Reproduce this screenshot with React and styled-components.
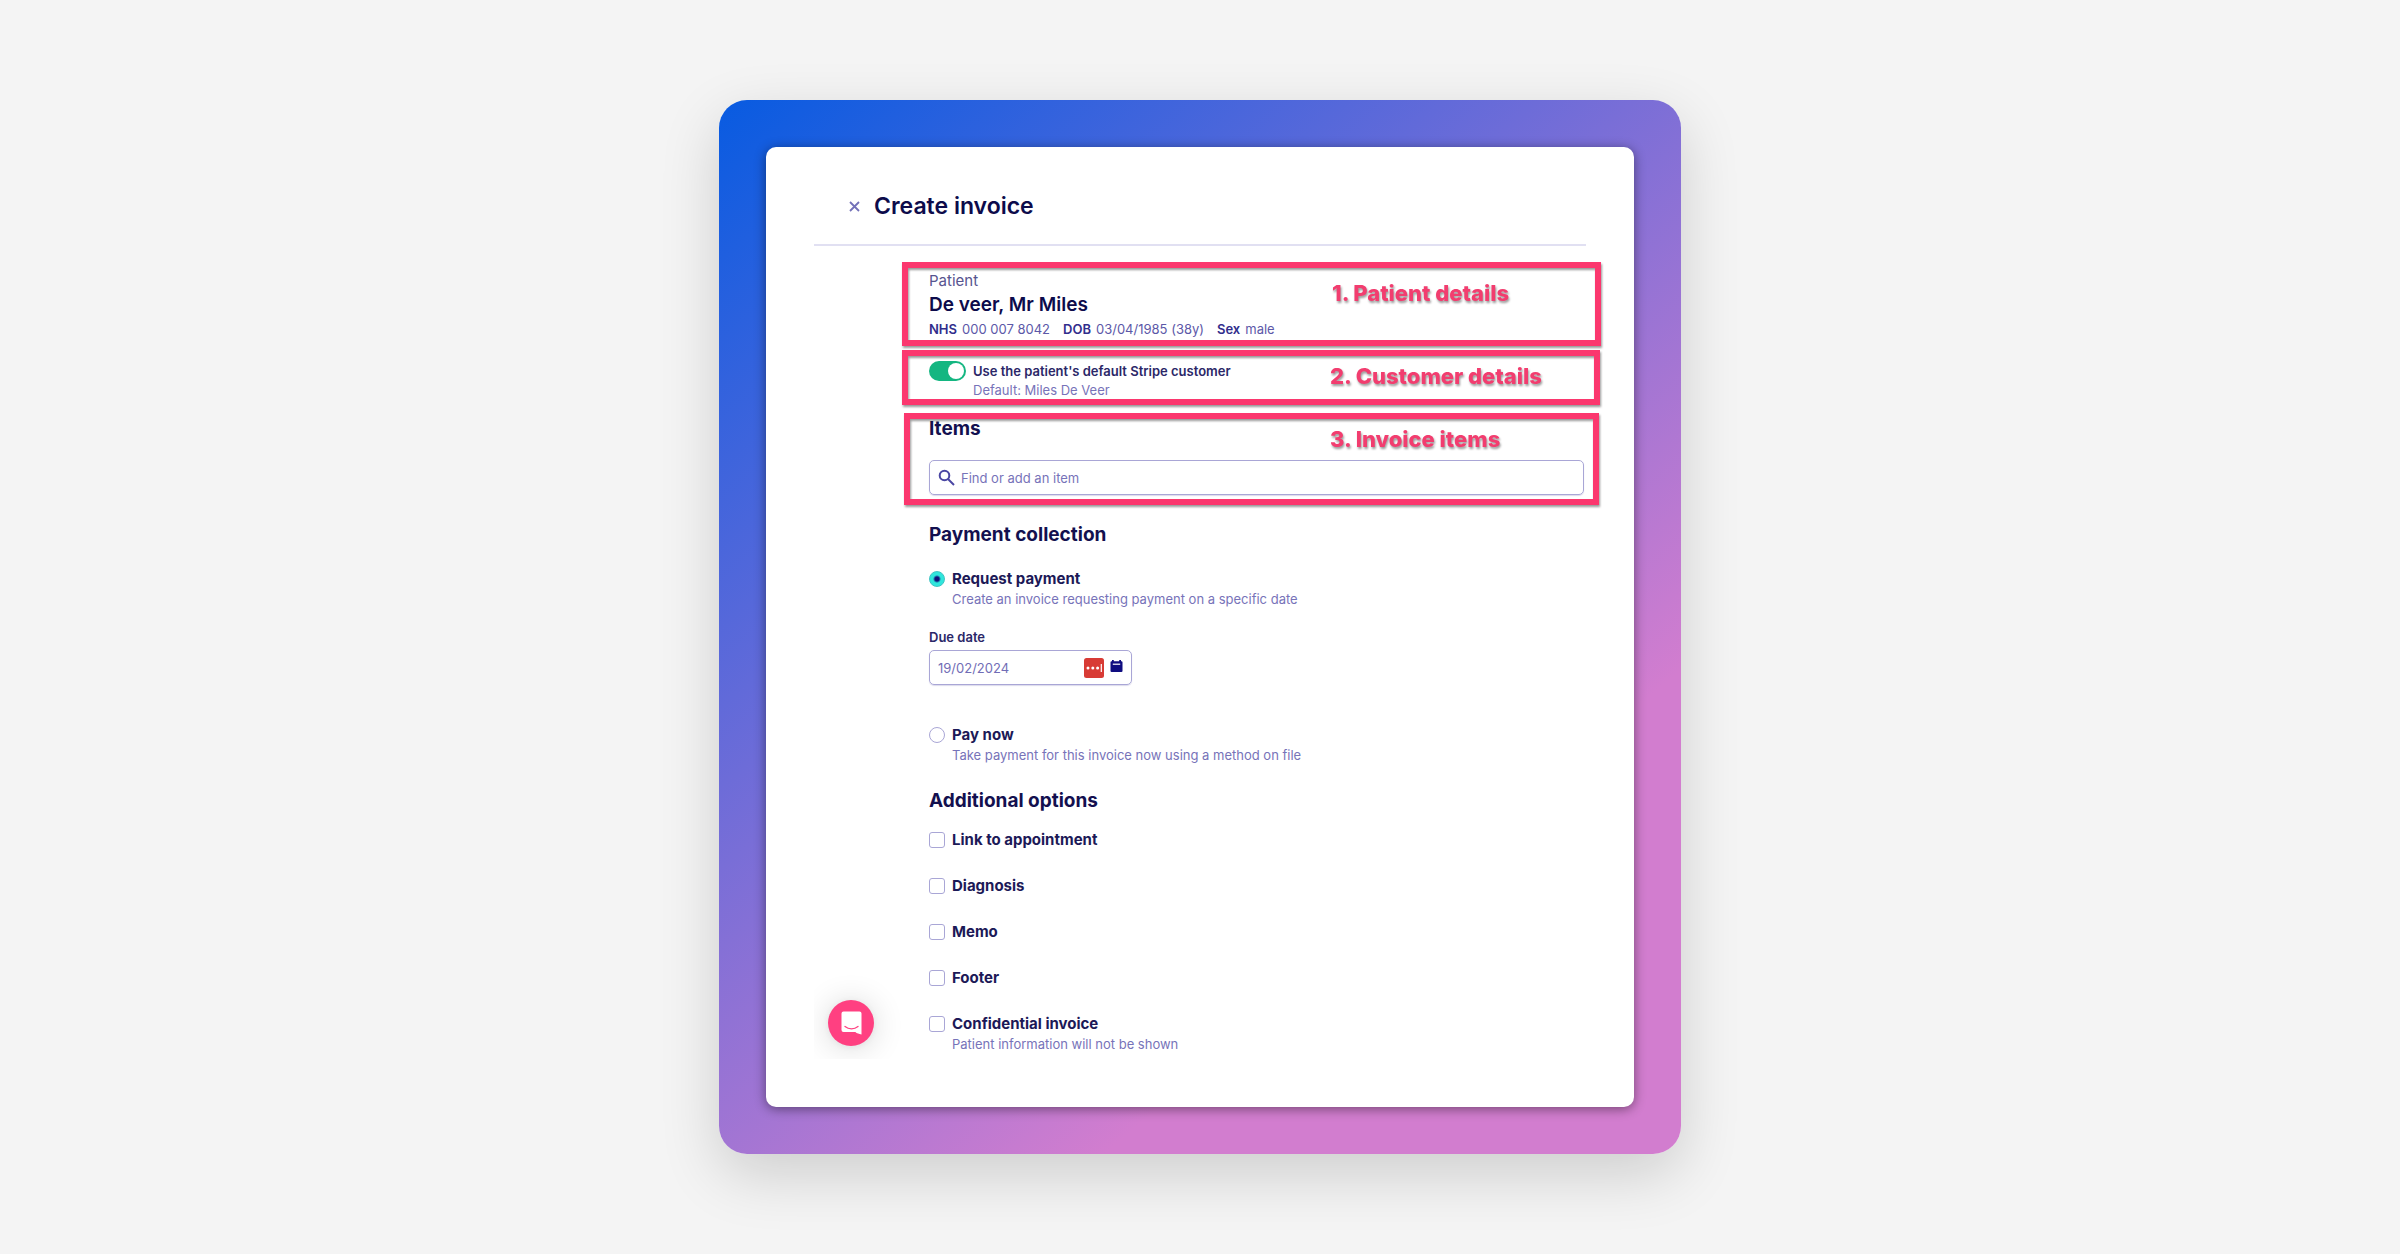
import React, { useState } from 'react';
import styled, { createGlobalStyle } from 'styled-components';

const GlobalStyle = createGlobalStyle`
  *, *::before, *::after {
    box-sizing: border-box;
  }

  body {
    margin: 0;
    background: #f4f4f4;
    color: #14124f;
    font-family: Inter, 'Liberation Sans', sans-serif;
  }

  h1, h2, p, dl, dd {
    margin: 0;
  }

  input, button {
    font: inherit;
    color: inherit;
  }
`;

const Page = styled.main`
  min-height: 100vh;
  display: flex;
  align-items: center;
  justify-content: center;
  padding: 24px;
`;

const Frame = styled.div`
  width: 100%;
  max-width: 962px;
  padding: 47px;
  border-radius: 28px;
  background: linear-gradient(140deg, #085be1 0%, #d27dcf 74%);
  box-shadow: 0 20px 60px rgba(0, 0, 0, 0.16);
`;

const Card = styled.div`
  padding: 43px 48px 48px;
  border-radius: 10px;
  background: #fff;
  box-shadow: 0 2px 12px rgba(0, 0, 0, 0.45);
`;

const Header = styled.header`
  display: flex;
  align-items: center;
  gap: 14px;
  padding: 0 35px 22px;
  border-bottom: 2px solid #e1e0f2;
`;

const CloseButton = styled.button`
  display: flex;
  padding: 0;
  border: 0;
  background: none;
  cursor: pointer;
`;

const Title = styled.h1`
  font-size: 23px;
  line-height: 32px;
  font-weight: 600;
  color: #0d0b4b;
`;

const Body = styled.div`
  display: grid;
  grid-template-columns: 115px 1fr;
`;

const Aside = styled.aside`
  display: flex;
  align-items: flex-end;
  padding: 0 0 13px 14px;
  overflow: hidden;
`;

const ChatButton = styled.button`
  display: flex;
  align-items: center;
  justify-content: center;
  width: 46px;
  height: 46px;
  padding: 0;
  border: 0;
  border-radius: 50%;
  background: #ff4081;
  box-shadow: 0 1px 6px rgba(0, 0, 0, 0.06), 0 2px 32px rgba(0, 0, 0, 0.16);
  cursor: pointer;
`;

const Form = styled.form`
  padding: 25px 2px 5px 0;
`;

const Section = styled.section`
  position: relative;
  margin-top: ${({ $space }) => $space || 0}px;
`;

/* Marker frame drawn over a section of the form */
const Highlight = styled.div`
  position: absolute;
  inset: ${({ $inset }) => $inset};
  padding: ${({ $pad }) => $pad};
  border: 6px solid #fb376e;
  filter: drop-shadow(1px 2px 1px rgba(0, 0, 0, 0.4));
  pointer-events: none;
`;

const HighlightLabel = styled.span`
  font-size: 22px;
  line-height: 28px;
  font-weight: 800;
  color: #f23d6f;
`;

const Overline = styled.p`
  font-size: 15px;
  line-height: 20px;
  color: #57548f;
`;

const PatientName = styled.p`
  font-size: 19px;
  line-height: 28px;
  font-weight: 600;
  color: #0d0b4b;
`;

const Facts = styled.dl`
  display: flex;
  flex-wrap: wrap;
  gap: 0 13px;
  font-size: 13px;
  line-height: 20px;
  color: #5c58a8;

  div {
    display: flex;
    gap: 5px;
  }

  dt {
    font-weight: 600;
    color: #312d8c;
  }
`;

const SectionTitle = styled.h2`
  font-size: 19px;
  line-height: 26px;
  font-weight: 700;
  color: #13104f;
`;

const SwitchRow = styled.div`
  display: grid;
  grid-template-columns: 37px 1fr;
  column-gap: 7px;
`;

const Switch = styled.input`
  appearance: none;
  display: flex;
  align-items: center;
  justify-content: flex-start;
  width: 37px;
  height: 20px;
  margin: 0;
  padding: 0 2px;
  border-radius: 10px;
  background: #b9b7dc;
  cursor: pointer;

  &::before {
    content: '';
    width: 16px;
    height: 16px;
    border-radius: 50%;
    background: #fff;
  }

  &:checked {
    justify-content: flex-end;
    background: #14b681;
  }
`;

const SwitchLabel = styled.label`
  font-size: 13px;
  line-height: 20px;
  font-weight: 600;
  color: #2b2768;
`;

const SwitchHint = styled.p`
  grid-column: 2;
  font-size: 13px;
  line-height: 18px;
  color: #7773b9;
`;

const Field = styled.div`
  display: flex;
  align-items: center;
  gap: 6px;
  height: 35px;
  width: ${({ $width }) => $width || '100%'};
  margin-top: ${({ $space }) => $space}px;
  padding: 0 8px;
  border: 1px solid #a9a6d6;
  border-radius: 5px;
  box-shadow: 0 1px 1px rgba(80, 76, 160, 0.2);

  svg {
    flex: none;
  }
`;

const TextInput = styled.input`
  flex: 1;
  min-width: 0;
  padding: 0;
  border: 0;
  outline: 0;
  background: none;
  font-size: 13px;
  line-height: 20px;
  color: #716db6;

  &::placeholder {
    color: #7773b9;
    opacity: 1;
  }
`;

const FieldLabel = styled.label`
  display: block;
  margin-top: 18px;
  font-size: 13px;
  line-height: 20px;
  font-weight: 600;
  color: #2b2768;
`;

const Choice = styled.div`
  display: grid;
  grid-template-columns: 16px 1fr;
  align-items: center;
  column-gap: 7px;
  margin-top: ${({ $space }) => $space || 0}px;
`;

const ChoiceInput = styled.input`
  appearance: none;
  width: 16px;
  height: 16px;
  margin: 0;
  border: 1px solid #a9a6d6;
  border-radius: ${({ type }) => (type === 'radio' ? '50%' : '3px')};
  background: #fff;
  cursor: pointer;

  &:checked {
    border-color: #3cc4c4;
    background: ${({ type }) =>
      type === 'radio' ? 'radial-gradient(circle, #10107c 2px, #2fe6dc 4px)' : '#2fe6dc'};
  }
`;

const ChoiceLabel = styled.label`
  font-size: 15px;
  line-height: 20px;
  font-weight: 700;
  color: #1c1957;
`;

const ChoiceHint = styled.p`
  grid-column: 2;
  font-size: 13px;
  line-height: 20px;
  color: #7773b9;
`;

const OptionList = styled.div`
  display: flex;
  flex-direction: column;
  gap: 26px;
  margin-top: 16px;
`;

const CloseIcon = () => (
  <svg width="11" height="11" viewBox="0 0 11 11" fill="none" stroke="#7371b8" strokeWidth="1.8">
    <path d="M1 1l9 9M10 1l-9 9" />
  </svg>
);

const SearchIcon = () => (
  <svg width="17" height="17" viewBox="0 0 17 17" fill="none" stroke="#4a46a3" strokeWidth="2">
    <circle cx="6.5" cy="6.5" r="4.8" />
    <path d="M10 10l6 6" />
  </svg>
);

const AutofillIcon = () => (
  <svg width="20" height="20" viewBox="0 0 20 20">
    <rect width="20" height="20" rx="2.5" fill="#d83b35" />
    <circle cx="4" cy="10" r="1.5" fill="#fff" />
    <circle cx="8.8" cy="10" r="1.5" fill="#fff" />
    <circle cx="13.6" cy="10" r="1.5" fill="#fff" />
    <rect x="16.7" y="6" width="1.2" height="8" fill="#fff" />
  </svg>
);

const CalendarIcon = () => (
  <svg width="13" height="18" viewBox="0 0 13 18">
    <path
      d="M2 1h1.8v1.2h5.400V1H11v1.200h.4A1.100 1.100 0 0 1 12.500 3.300v8.600a1.100 1.100 0 0 1-1.100 1.100H1.600A1.100 1.100 0 0 1 .5 11.900V3.300A1.100 1.100 0 0 1 1.600 2.200H2z"
      fill="#0f0d80"
    />
    <path d="M2.800 5.200h7.400" stroke="#fff" strokeWidth="1.200" />
  </svg>
);

const ChatIcon = () => (
  <svg width="21" height="24" viewBox="0 0 21 24">
    <path
      d="M2.500.5h16A2 2 0 0 1 20.500 2.500V23.500c-2.600-.4-4.500-1.200-6.200-2.500H2.500a2 2 0 0 1-2-2V2.500a2 2 0 0 1 2-2z"
      fill="#fff"
    />
    <path
      d="M4 15.500c3.800 3.100 9.200 3.100 13 0"
      fill="none"
      stroke="#ff4081"
      strokeWidth="1.300"
      strokeLinecap="round"
    />
  </svg>
);

const OPTIONS = [
  { id: 'appointment', label: 'Link to appointment' },
  { id: 'diagnosis', label: 'Diagnosis' },
  { id: 'memo', label: 'Memo' },
  { id: 'footer', label: 'Footer' },
  {
    id: 'confidential',
    label: 'Confidential invoice',
    hint: 'Patient information will not be shown',
  },
];

const App = () => {
  const [useDefault, setUseDefault] = useState(true);
  const [collection, setCollection] = useState('request');
  const [dueDate, setDueDate] = useState('19/02/2024');

  return (
    <Page>
      <GlobalStyle />
      <Frame>
        <Card>
          <Header>
            <CloseButton type="button" aria-label="Close">
              <CloseIcon />
            </CloseButton>
            <Title>Create invoice</Title>
          </Header>

          <Body>
            <Aside>
              <ChatButton type="button" aria-label="Open chat">
                <ChatIcon />
              </ChatButton>
            </Aside>

            <Form onSubmit={(e) => e.preventDefault()}>
              <Section>
                <Overline>Patient</Overline>
                <PatientName>De veer, Mr Miles</PatientName>
                <Facts>
                  <div>
                    <dt>NHS</dt>
                    <dd>000 007 8042</dd>
                  </div>
                  <div>
                    <dt>DOB</dt>
                    <dd>03/04/1985 (38y)</dd>
                  </div>
                  <div>
                    <dt>Sex</dt>
                    <dd>male</dd>
                  </div>
                </Facts>
                <Highlight $inset="-9px -17px -7px -27px" $pad="11px 0 0 424px">
                  <HighlightLabel>1. Patient details</HighlightLabel>
                </Highlight>
              </Section>

              <Section $space={22}>
                <SwitchRow>
                  <Switch
                    id="default-customer"
                    type="checkbox"
                    role="switch"
                    checked={useDefault}
                    onChange={(e) => setUseDefault(e.target.checked)}
                  />
                  <SwitchLabel htmlFor="default-customer">
                    Use the patient's default Stripe customer
                  </SwitchLabel>
                  <SwitchHint>Default: Miles De Veer</SwitchHint>
                </SwitchRow>
                <Highlight $inset="-11px -16px -6px -27px" $pad="6px 0 0 422px">
                  <HighlightLabel>2. Customer details</HighlightLabel>
                </Highlight>
              </Section>

              <Section $space={17}>
                <SectionTitle>Items</SectionTitle>
                <Field $space={18}>
                  <SearchIcon />
                  <TextInput type="search" aria-label="Items" placeholder="Find or add an item" />
                </Field>
                <Highlight $inset="-3px -15px -10px -25px" $pad="6px 0 0 420px">
                  <HighlightLabel>3. Invoice items</HighlightLabel>
                </Highlight>
              </Section>

              <Section $space={27}>
                <SectionTitle>Payment collection</SectionTitle>
                <Choice $space={21}>
                  <ChoiceInput
                    id="request"
                    type="radio"
                    name="collection"
                    checked={collection === 'request'}
                    onChange={() => setCollection('request')}
                  />
                  <ChoiceLabel htmlFor="request">Request payment</ChoiceLabel>
                  <ChoiceHint>Create an invoice requesting payment on a specific date</ChoiceHint>
                </Choice>
                <FieldLabel htmlFor="due-date">Due date</FieldLabel>
                <Field $width="203px" $space={3}>
                  <TextInput
                    id="due-date"
                    type="text"
                    value={dueDate}
                    onChange={(e) => setDueDate(e.target.value)}
                  />
                  <AutofillIcon />
                  <CalendarIcon />
                </Field>
                <Choice $space={40}>
                  <ChoiceInput
                    id="pay-now"
                    type="radio"
                    name="collection"
                    checked={collection === 'now'}
                    onChange={() => setCollection('now')}
                  />
                  <ChoiceLabel htmlFor="pay-now">Pay now</ChoiceLabel>
                  <ChoiceHint>Take payment for this invoice now using a method on file</ChoiceHint>
                </Choice>
              </Section>

              <Section $space={23}>
                <SectionTitle>Additional options</SectionTitle>
                <OptionList>
                  {OPTIONS.map((option) => (
                    <Choice key={option.id}>
                      <ChoiceInput id={option.id} type="checkbox" />
                      <ChoiceLabel htmlFor={option.id}>{option.label}</ChoiceLabel>
                      {option.hint && <ChoiceHint>{option.hint}</ChoiceHint>}
                    </Choice>
                  ))}
                </OptionList>
              </Section>
            </Form>
          </Body>
        </Card>
      </Frame>
    </Page>
  );
};

export default App;
